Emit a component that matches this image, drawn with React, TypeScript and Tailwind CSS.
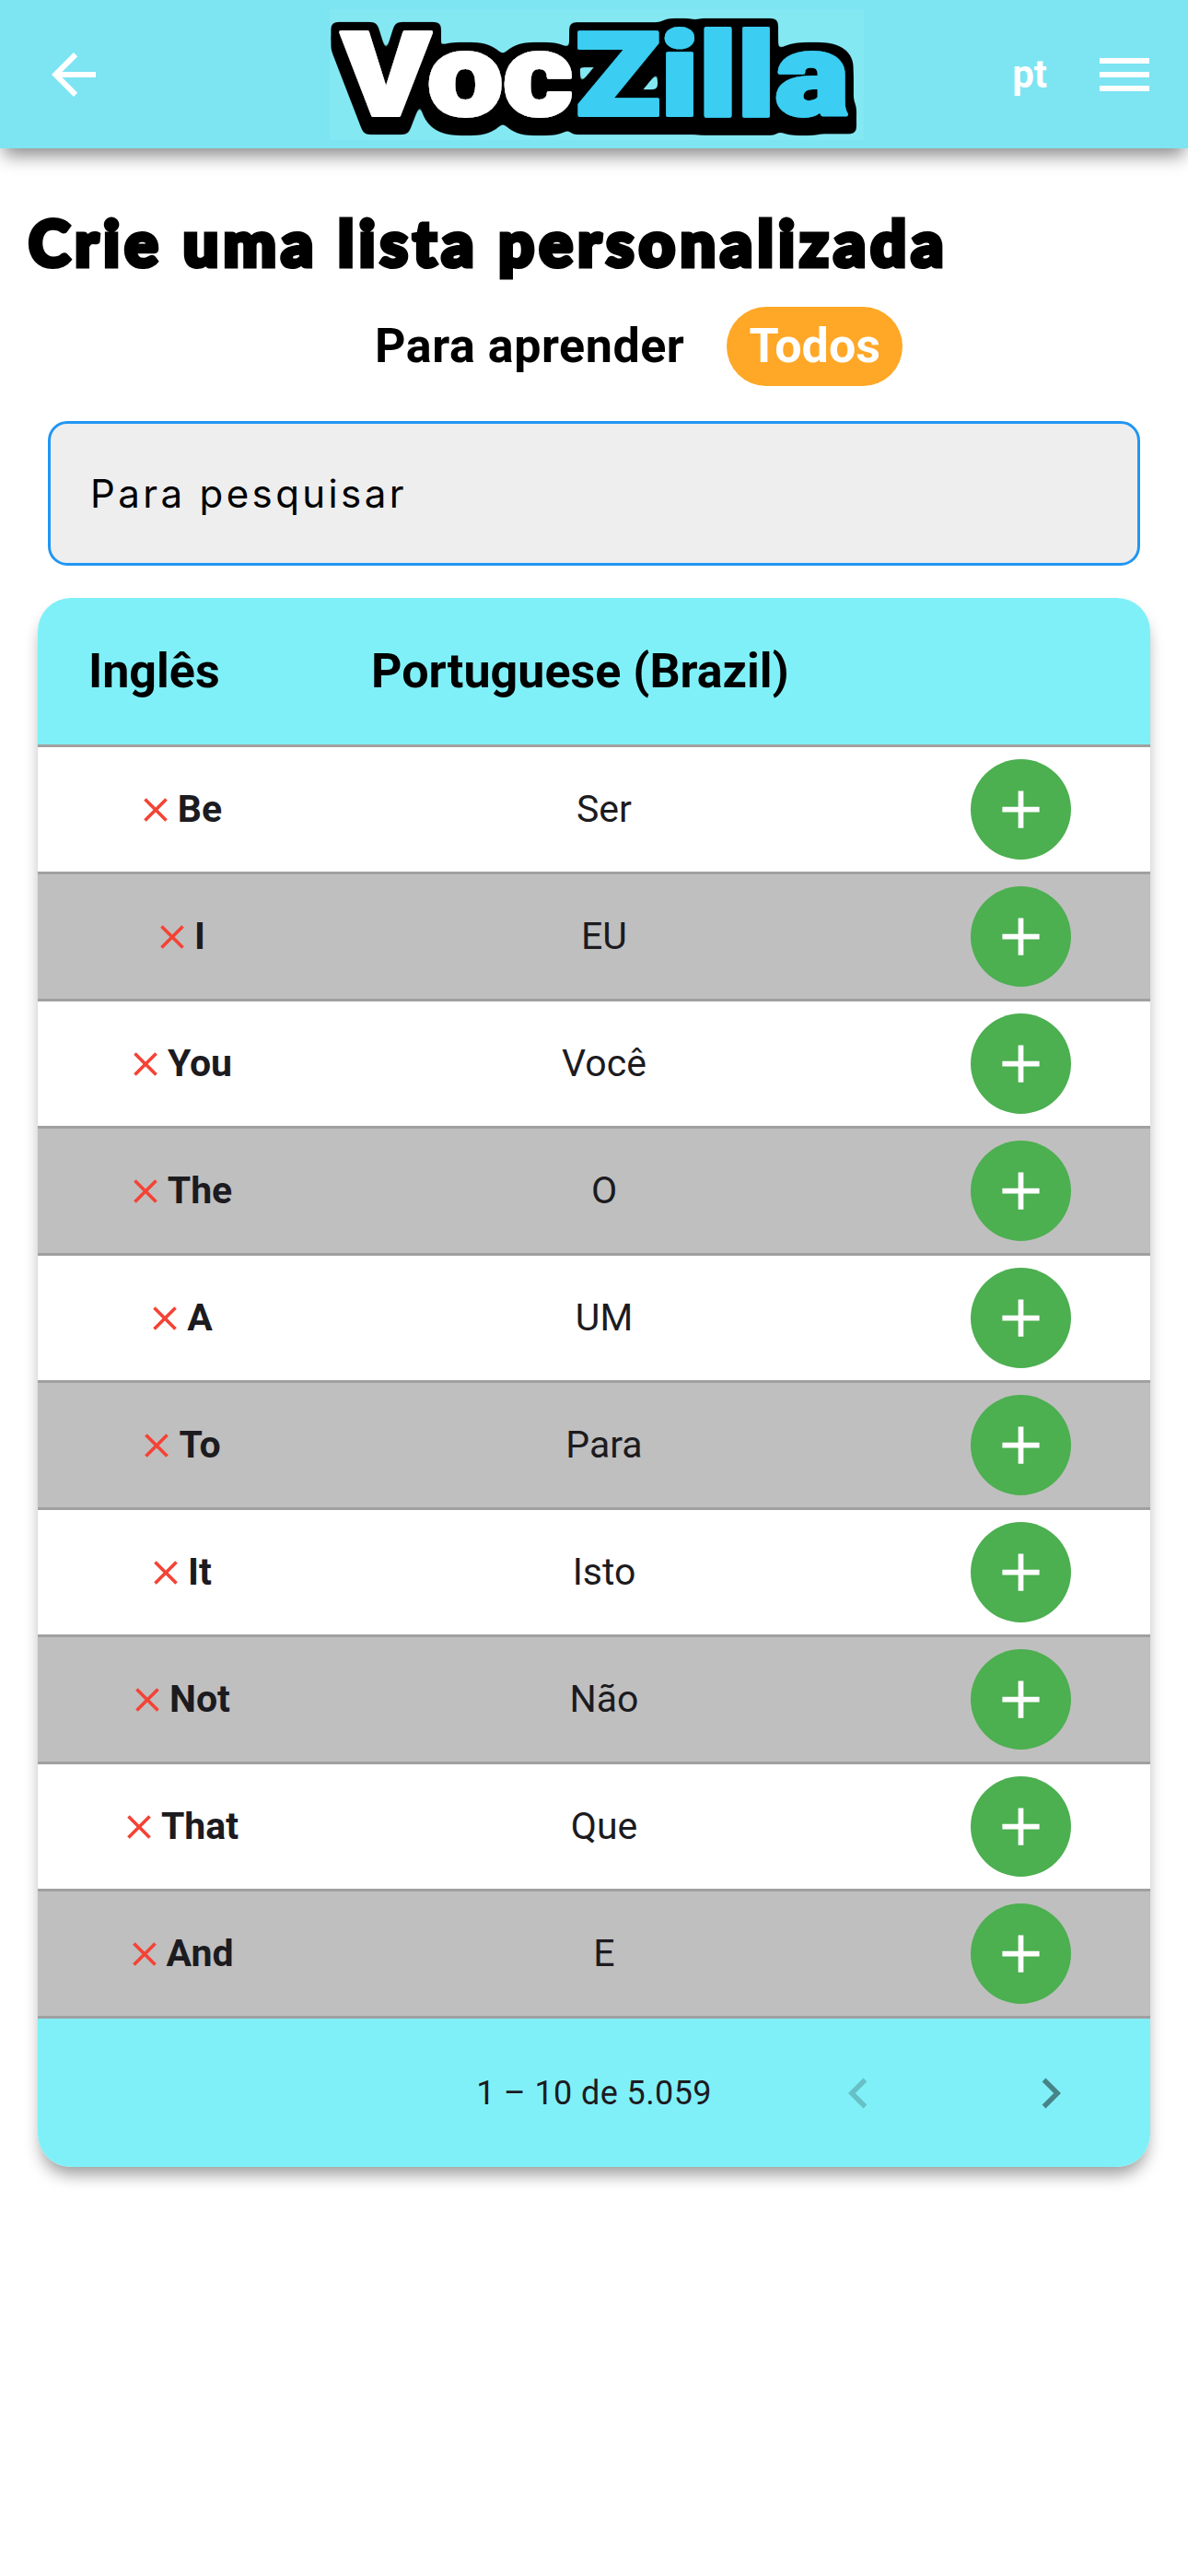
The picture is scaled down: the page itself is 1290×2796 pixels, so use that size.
const rows = [
  ['Be', 'Ser'],
  ['I', 'EU'],
  ['You', 'Você'],
  ['The', 'O'],
  ['A', 'UM'],
  ['To', 'Para'],
  ['It', 'Isto'],
  ['Not', 'Não'],
  ['That', 'Que'],
  ['And', 'E'],
];

function Icon({ d, className }: { d: string; className: string }) {
  return (
    <svg viewBox="0 0 24 24" fill="currentColor" className={className}>
      <path d={d} />
    </svg>
  );
}

function Logo() {
  return (
    <svg viewBox="0 0 580 142" className="w-[580px] h-[142px] bg-[#84e8f3] ml-[242px] overflow-visible">
      <defs>
        {/* black outline plus a drop below it, so the letters stay one text each */}
        <filter id="logo-outline" x="-5%" y="-20%" width="110%" height="150%">
          <feMorphology in="SourceAlpha" operator="dilate" radius="8" result="fat" />
          <feGaussianBlur in="fat" stdDeviation="3" result="soft" />
          <feComponentTransfer in="soft" result="edge">
            <feFuncA type="linear" slope="8" intercept="-2.5" />
          </feComponentTransfer>
          <feOffset in="edge" dy="10" result="drop" />
          <feMerge>
            <feMergeNode in="drop" />
            <feMergeNode in="edge" />
            <feMergeNode in="SourceGraphic" />
          </feMerge>
        </filter>
      </defs>
      <g
        filter="url(#logo-outline)"
        fontFamily="Roboto, sans-serif"
        fontWeight="900"
        fontSize="126"
        strokeLinejoin="round"
        strokeWidth="4"
      >
        <text x="13" y="115" textLength="251" lengthAdjust="spacingAndGlyphs" fill="#fff" stroke="#fff">
          Voc
        </text>
        <text x="267" y="115" textLength="297" lengthAdjust="spacingAndGlyphs" fill="#3bcdf2" stroke="#3bcdf2">
          Zilla
        </text>
      </g>
    </svg>
  );
}

function Header() {
  return (
    <header className="flex items-center h-[161px] bg-[#7de4f2] shadow-[0_12px_18px_-4px_rgba(0,0,0,0.45)] pl-[44px] pr-[42px]">
      <Icon
        d="M20 11H7.83l5.59-5.59L12 4l-8 8 8 8 1.41-1.41L7.83 13H20v-2z"
        className="w-[72px] h-[72px] text-white"
      />
      <Logo />
      <div className="flex items-center gap-[57px] ml-auto">
        <span className="text-[42px] font-bold text-white">pt</span>
        <Icon
          d="M3 18h18v-2H3v2zm0-5h18v-2H3v2zm0-7v2h18V6H3z"
          className="w-[72px] h-[72px] text-white -mx-[9px]"
        />
      </div>
    </header>
  );
}

function Row({ en, pt, odd }: { en: string; pt: string; odd: boolean }) {
  return (
    <div
      className={`grid grid-cols-[306px_618px_1fr] items-center h-[138px] border-b-[3px] border-[#a0a0a0] ${
        odd ? 'bg-[#bfbfbf]' : 'bg-white'
      }`}
    >
      <div className="flex items-center justify-center gap-[2px] text-[41px] font-bold text-[#1c1b1f]">
        <Icon
          d="M19 6.41L17.59 5 12 10.59 6.41 5 5 6.41 10.59 12 5 17.59 6.41 19 12 13.41 17.59 19 19 17.59 13.41 12z"
          className="w-[44px] h-[44px] text-[#f44336]"
        />
        <span>{en}</span>
      </div>
      <div className="text-center text-[41px] text-[#1c1b1f]">{pt}</div>
      <div className="flex justify-center pl-[2px]">
        <div className="flex items-center justify-center w-[109px] h-[109px] rounded-full bg-[#4caf50]">
          <Icon d="M19 13h-6v6h-2v-6H5v-2h6V5h2v6h6v2z" className="w-[69px] h-[69px] text-white" />
        </div>
      </div>
    </div>
  );
}

export default function App() {
  return (
    <div className="min-h-[2796px] bg-white font-['Roboto',sans-serif]">
      <Header />

      <h1 className="mt-[66px] ml-[31px] text-[68px] leading-[72px] tracking-[5.4px] font-black text-black font-['Lato',sans-serif] [-webkit-text-stroke:5px_black]">
        Crie uma lista personalizada
      </h1>

      <div className="flex items-center mt-[34px] pl-[407px] gap-[46px]">
        <span className="text-[52px] tracking-[0.55px] font-bold text-black">Para aprender</span>
        <span className="flex items-center h-[86px] px-[24px] rounded-[43px] bg-[#ffa726] text-[52px] font-bold text-white">
          Todos
        </span>
      </div>

      <div className="flex items-center mx-[52px] mt-[38px] h-[157px] px-[43px] rounded-[21px] border-[3px] border-[#2196f3] bg-[#eeeeee] text-[42px] tracking-[3.4px] text-black font-['Inter',sans-serif]">
        Para pesquisar
      </div>

      <div className="mx-[41px] mt-[35px] rounded-[36px] overflow-hidden shadow-[0_12px_18px_-4px_rgba(0,0,0,0.4)]">
        <div className="flex items-center h-[162px] border-b-[3px] border-[#a0a0a0] bg-[#80f0f8] pl-[55px] text-[52px] font-bold text-black">
          <span className="w-[307px]">Inglês</span>
          <span>Portuguese (Brazil)</span>
        </div>
        {rows.map(([en, pt], i) => (
          <Row key={en} en={en} pt={pt} odd={i % 2 === 1} />
        ))}
        <div className="flex items-center h-[161px] bg-[#80f0f8] text-[#1c1b1f]">
          <span className="w-[858px] text-right text-[36px] tracking-[0.4px] pr-[126px]">1 – 10 de 5.059</span>
          <Icon
            d="M15.41 7.41L14 6l-6 6 6 6 1.41-1.41L10.83 12z"
            className="w-[66px] h-[66px] text-black/20"
          />
          <Icon
            d="M10 6L8.59 7.41 13.17 12l-4.58 4.59L10 18l6-6z"
            className="w-[66px] h-[66px] text-black/45 ml-[143px]"
          />
        </div>
      </div>
    </div>
  );
}
